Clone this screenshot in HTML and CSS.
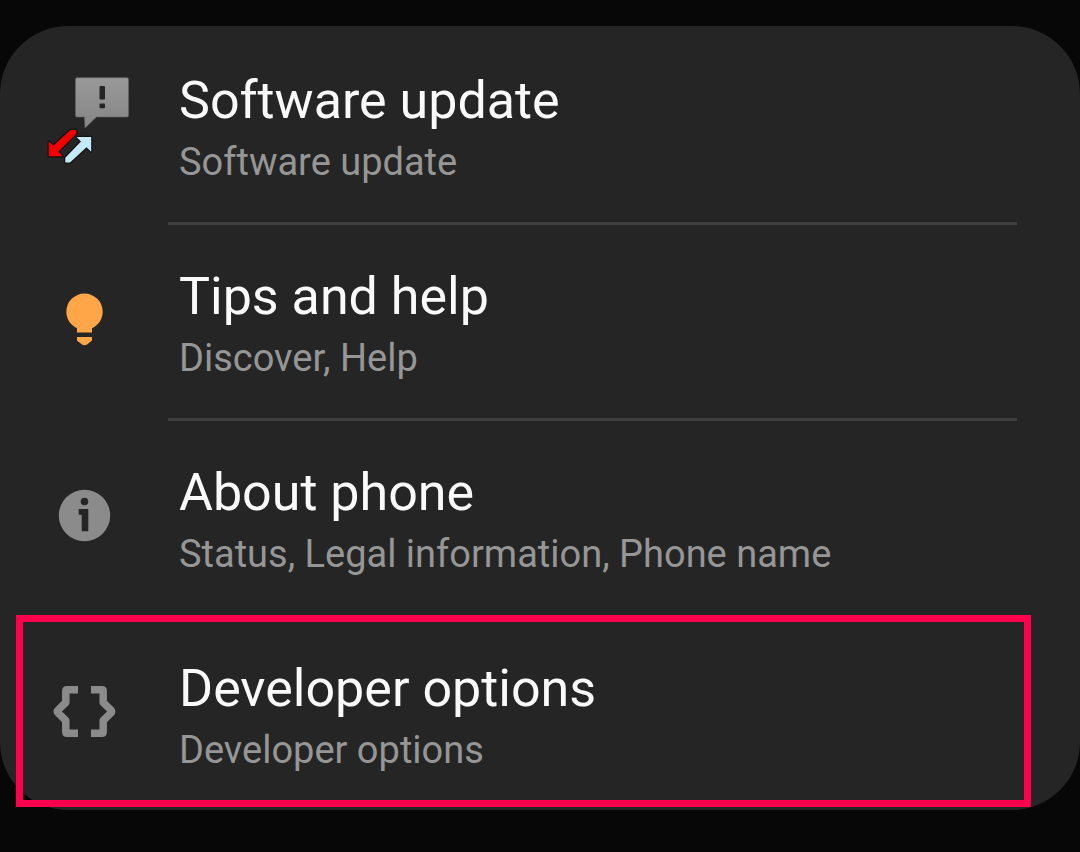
FILE: index.html
```html
<!DOCTYPE html>
<html lang="en">
  <head>
    <meta charset="UTF-8" />
    <meta name="viewport" content="width=device-width, initial-scale=1.0" />
    <title>Settings</title>
    <link rel="stylesheet" href="styles.css">
  </head>
  <body>
    <nav class="card" aria-label="Settings">
      <a class="item" href="#software-update">
        <span class="icon">
          <svg viewBox="0 0 96 96" aria-hidden="true">
            <defs>
              <linearGradient id="bubble" x1="0" y1="0" x2="0" y2="1">
                <stop offset="0" stop-color="#999" />
                <stop offset="1" stop-color="#858585" />
              </linearGradient>
            </defs>
            <path fill="url(#bubble)" stroke="#666" stroke-width="0.6" d="M41 1.7H91a1.5 1.5 0 0 1 1.5 1.5V39.500a1.500 1.500 0 0 1-1.500 1.500H60.500L49 52 48.500 41H41a1.500 1.500 0 0 1-1.500-1.500V3.200A1.500 1.500 0 0 1 41 1.700Z" />
            <rect x="63.5" y="10" width="5.500" height="13.500" rx="1" fill="#252525" />
            <rect x="63.500" y="27.500" width="5.500" height="4.700" rx="1" fill="#252525" />
            <g stroke="#0a0a0a" stroke-opacity="0.7" stroke-width="2.400" stroke-linejoin="round" paint-order="stroke">
              <path fill="#f20000" d="M12.800 65.500 17.500 69.500 34.500 54 40.300 54 40.300 57.800 22.500 75.500 26.500 80.300H12.800Z" />
              <path fill="#c4e9f8" d="M40.500 61H55.200V75.700L50.500 71.200 34 86.500H29.300V81.700L45 65.500Z" />
            </g>
          </svg>
        </span>
        <span class="text">
          <span class="title">Software update</span>
          <span class="summary">Software update</span>
        </span>
      </a>

      <a class="item" href="#tips">
        <span class="icon">
          <svg viewBox="0 0 96 96" aria-hidden="true">
            <g fill="#ffa748">
              <circle cx="48.5" cy="39.7" r="18.200" />
              <path d="M41 54H56V60.500H41Z" />
              <path d="M41 65H56V68.500L51 72.500Q48.500 74 46 72.500L41 68.500Z" />
            </g>
          </svg>
        </span>
        <span class="text divided">
          <span class="title">Tips and help</span>
          <span class="summary">Discover, Help</span>
        </span>
      </a>

      <a class="item" href="#about">
        <span class="icon">
          <svg viewBox="0 0 96 96" aria-hidden="true">
            <circle cx="48.500" cy="47.500" r="25.700" fill="#8b8b8b" />
            <circle cx="48.500" cy="33.500" r="3.800" fill="#252525" />
            <path d="M42.700 41H52.300V63.300H45.700V46.700H42.700Z" fill="#252525" />
          </svg>
        </span>
        <span class="text divided">
          <span class="title">About phone</span>
          <span class="summary">Status, Legal information, Phone name</span>
        </span>
      </a>

      <a class="item highlighted" href="#developer">
        <span class="icon">
          <svg viewBox="0 0 96 96" aria-hidden="true">
            <g fill="none" stroke="#8b8b8b" stroke-width="7.500" stroke-linejoin="round">
              <path d="M42 25.700H31Q29.800 25.700 29.800 27V38.500L22 46.200Q20.700 47.500 22 48.800L29.800 56.500V68Q29.800 69.300 31 69.300H42" />
              <path d="M55 25.700H66Q67.200 25.700 67.200 27V38.500L75 46.200Q76.300 47.500 75 48.800L67.200 56.500V68Q67.200 69.300 66 69.300H55" />
            </g>
          </svg>
        </span>
        <span class="text">
          <span class="title">Developer options</span>
          <span class="summary">Developer options</span>
        </span>
      </a>
    </nav>
  </body>
</html>
```
FILE: styles.css
```css
body {
  margin: 0;
  padding: 26px 0 42px;
  background-color: #070707;
  font-family: Roboto, sans-serif;
}
.card {
  background-color: #252525;
  border-radius: 68px;
}
.item {
  position: relative;
  display: flex;
  color: #fafafa;
  text-decoration: none;
}
.icon {
  display: flex;
  flex: 0 0 168px;
  align-items: center;
  justify-content: center;
}
.icon svg {
  width: 96px;
  height: 96px;
}
.text {
  display: flex;
  flex: 1;
  flex-direction: column;
  gap: 9px;
  margin-right: 63px;
  padding: 42px 0 38px 11px;
  border-top: 3px solid transparent;
}
.divided {
  border-top-color: #3f3f3f;
}
.title {
  font-size: 52px;
  line-height: 60px;
}
.summary {
  color: #969696;
  font-size: 38px;
  line-height: 44px;
}
/* frame drawn over the row, reaching past the card's round corner */
.highlighted::after {
  content: "";
  position: absolute;
  top: 1px;
  right: 49px;
  bottom: 3px;
  left: 16px;
  border: 7px solid #ff004f;
}
```
